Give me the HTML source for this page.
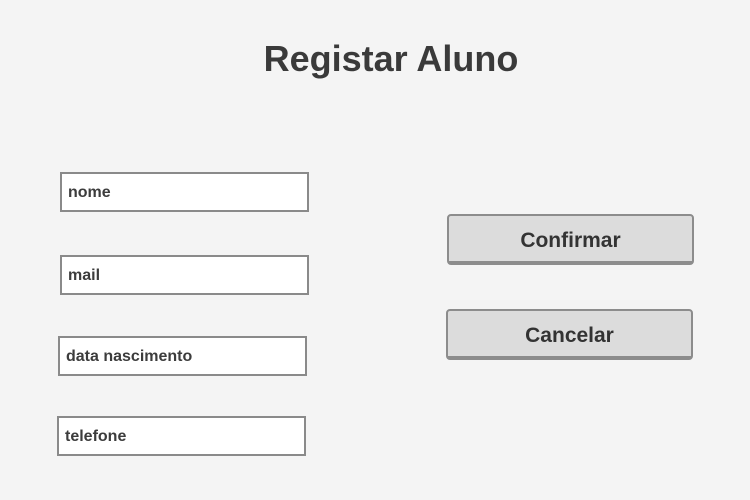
<!DOCTYPE html>
<html><head><style>
body{margin:0;width:750px;height:500px;background:#f4f4f4;font-family:"Liberation Sans",sans-serif;color:#3a3a3a;position:relative;overflow:hidden}
h1{position:absolute;left:0;width:782px;top:37px;margin:0;text-align:center;font-size:36px;font-weight:bold;line-height:44px;letter-spacing:0}
.in{position:absolute;background:#fff;border:2px solid #8a8a8a;font-size:16px;font-weight:bold;line-height:38px;padding-left:6px;box-sizing:border-box;height:40px;width:249px;color:#3c3c3c}
.btn{position:absolute;width:247px;height:51px;box-sizing:border-box;background:#dcdcdc;border:2px solid #8c8c8c;border-bottom:4px solid #8c8c8c;border-radius:4px;text-align:center;font-size:21px;font-weight:bold;line-height:49px;color:#333}
</style></head><body>
<h1>Registar Aluno</h1>
<div class="in" style="left:60px;top:172px">nome</div>
<div class="in" style="left:60px;top:255px">mail</div>
<div class="in" style="left:58px;top:336px">data nascimento</div>
<div class="in" style="left:57px;top:416px">telefone</div>
<div class="btn" style="left:447px;top:214px">Confirmar</div>
<div class="btn" style="left:446px;top:309px">Cancelar</div>
</body></html>
